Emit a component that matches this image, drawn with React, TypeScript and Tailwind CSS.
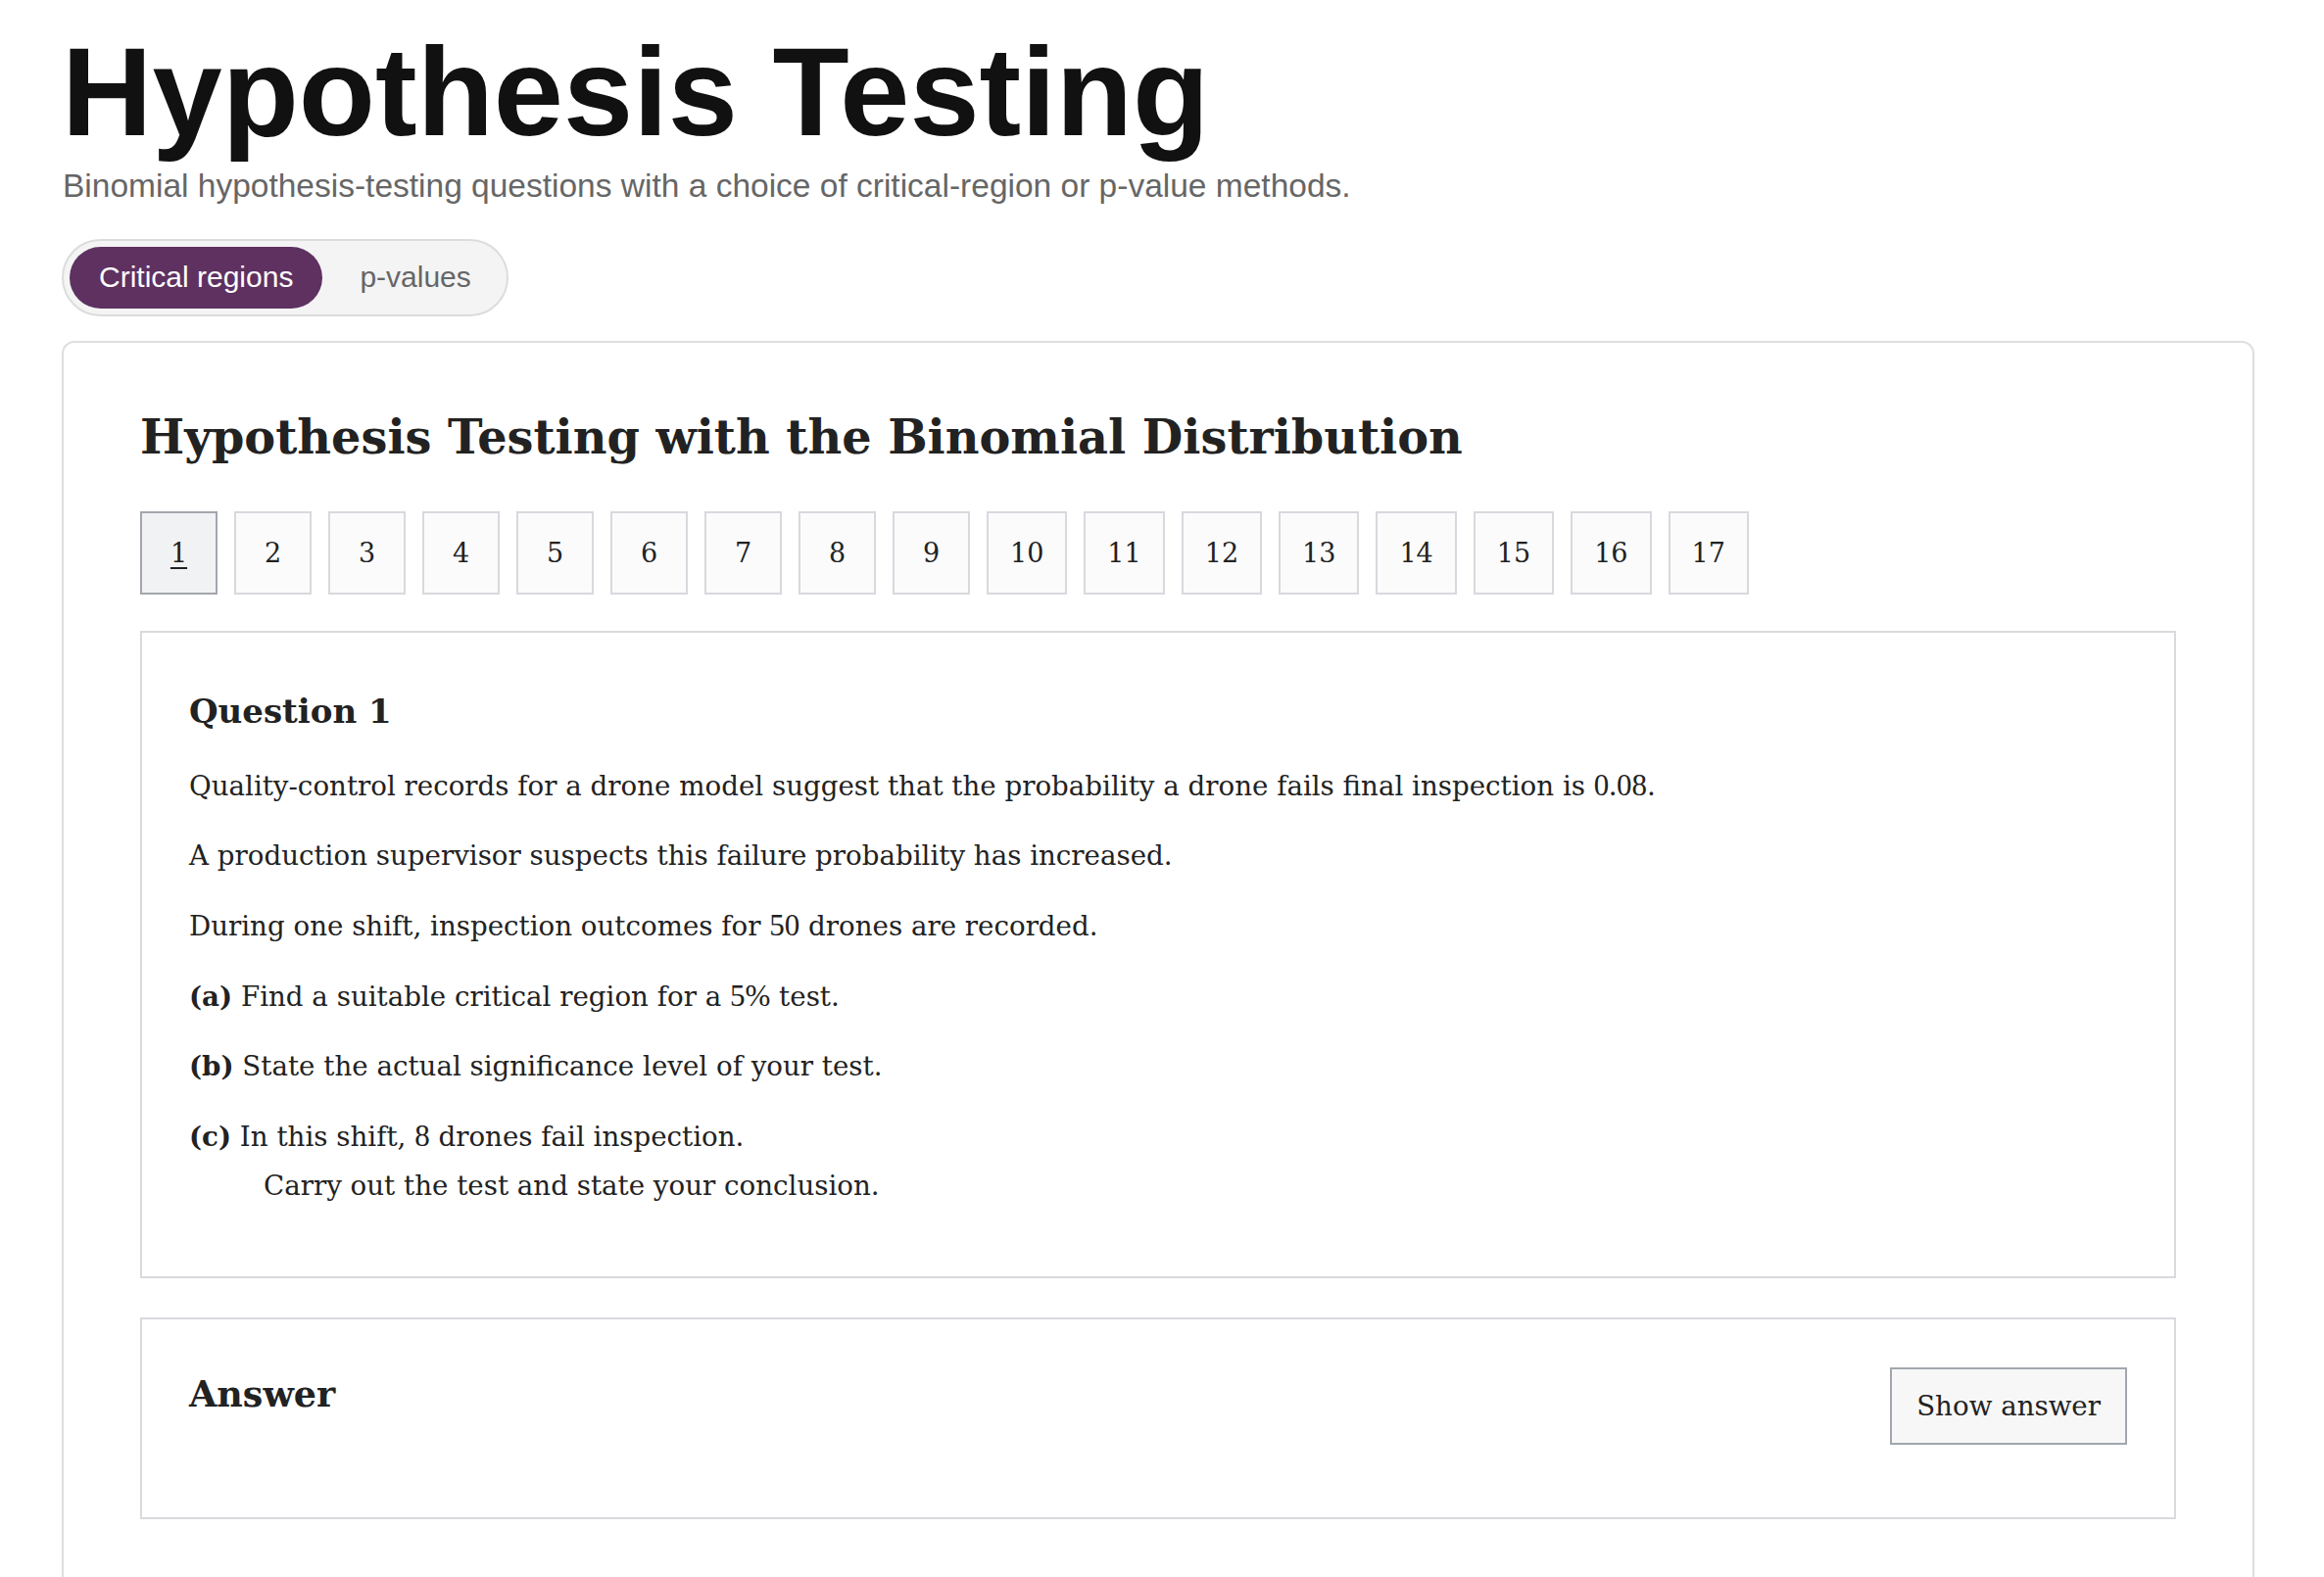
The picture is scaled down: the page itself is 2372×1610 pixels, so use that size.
import React from "react";

const serif = "font-['DejaVu_Serif',Georgia,serif]";
const heading = "font-['DejaVu_Serif',Georgia,serif] font-bold";

// numbers inside the question text are typeset as maths
function M({ children }: { children: React.ReactNode }) {
  return <span className="font-['Liberation_Serif','Times_New_Roman',serif] text-[31px]">{children}</span>;
}

function NumberTabs() {
  const numbers = Array.from({ length: 17 }, (_, i) => i + 1);

  return (
    <div className="mt-[52px] flex gap-[17px]">
      {numbers.map((n) => (
        <button
          key={n}
          className={
            n === 1
              ? `${serif} flex h-[85px] min-w-[79px] items-center justify-center border-2 border-[#a2a6ad] bg-[#f1f2f4] px-[22px] text-[27px] leading-none text-[#222] underline decoration-[2px] underline-offset-[5px]`
              : `${serif} flex h-[85px] min-w-[79px] items-center justify-center border-2 border-[#d8d9de] bg-[#fbfbfb] px-[22px] text-[27px] leading-none text-[#222]`
          }
        >
          {n}
        </button>
      ))}
    </div>
  );
}

function QuestionBox() {
  return (
    <div className="mt-[37px] border-2 border-[#d9d9de] bg-white px-[48px] pt-[63px] pb-[67px]">
      <h3 className={`${heading} text-[34px] leading-none text-[#222]`}>Question 1</h3>

      <div className={`${serif} mt-[34px] flex flex-col gap-[21px] text-[27.7px] leading-[50px] text-[#222]`}>
        <p>
          Quality-control records for a drone model suggest that the probability a drone fails final
          inspection is <M>0.08</M>.
        </p>
        <p>A production supervisor suspects this failure probability has increased.</p>
        <p>
          During one shift, inspection outcomes for <M>50</M> drones are recorded.
        </p>
        <p>
          <span className="font-bold">(a)</span> Find a suitable critical region for a <M>5%</M> test.
        </p>
        <p>
          <span className="font-bold">(b)</span> State the actual significance level of your test.
        </p>
        <div>
          <p>
            <span className="font-bold">(c)</span> In this shift, <M>8</M> drones fail inspection.
          </p>
          <p className="pl-[76px]">Carry out the test and state your conclusion.</p>
        </div>
      </div>
    </div>
  );
}

function AnswerBox() {
  return (
    <div className="mt-[40px] flex items-start justify-between border-2 border-[#d9d9de] bg-white pt-[49px] pr-[48px] pb-[74px] pl-[48px]">
      <h3 className={`${heading} mt-[10px] text-[36.5px] leading-none text-[#222]`}>Answer</h3>
      <button
        className={`${serif} flex h-[79px] items-center border-2 border-[#a2a6ad] bg-[#f7f7f7] px-[25px] text-[27.7px] leading-none text-[#222]`}
      >
        Show answer
      </button>
    </div>
  );
}

export default function App() {
  return (
    <div className="min-h-screen bg-white pt-[30px] pl-[63px] pr-[71px] font-['Liberation_Sans',Arial,sans-serif]">
      {/* Page header */}
      <h1 className="text-[128px] leading-none font-bold text-[#111]">Hypothesis Testing</h1>
      <p className="mt-[15px] pl-[1px] text-[33.5px] leading-none text-[#666]">
        Binomial hypothesis-testing questions with a choice of critical-region or p-value methods.
      </p>

      {/* Method toggle */}
      <div className="mt-[37px] inline-flex gap-[8px] rounded-full border-2 border-[#dcdcdc] bg-[#f4f4f4] p-[6px]">
        <button className="flex h-[63px] items-center rounded-full bg-[#5e3160] px-[30px] text-[30px] leading-none text-white">
          Critical regions
        </button>
        <button className="flex h-[63px] items-center rounded-full px-[30px] text-[30px] leading-none text-[#666]">
          p-values
        </button>
      </div>

      {/* Card */}
      <div className="mt-[25px] rounded-[13px] border-2 border-[#dedede] bg-white px-[78px] pt-[73px] pb-[80px]">
        <h2 className={`${heading} text-[47.8px] leading-none text-[#222]`}>
          Hypothesis Testing with the Binomial Distribution
        </h2>

        <NumberTabs />
        <QuestionBox />
        <AnswerBox />
      </div>
    </div>
  );
}
